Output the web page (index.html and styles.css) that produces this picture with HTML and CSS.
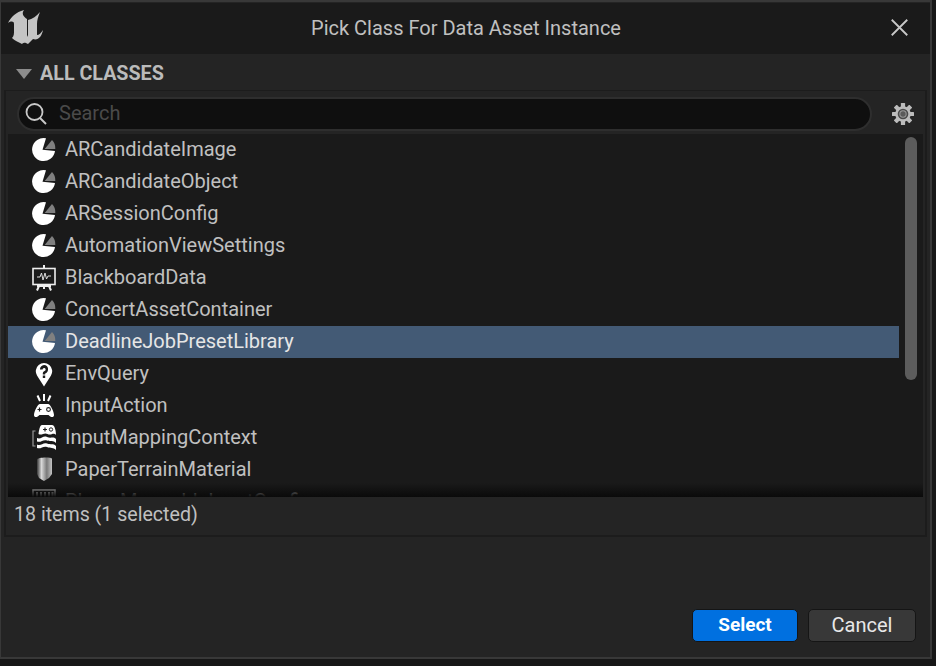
FILE: index.html
```html
<!DOCTYPE html>
<html>
    <head>
        <meta charset="utf-8">
        <title>Pick Class For Data Asset Instance</title>
        <link rel="stylesheet" href="styles.css">
    </head>
    <body>
        <svg class="defs" width="0" height="0">
            <symbol id="pie" viewBox="0 0 24 26">
                <path fill="#fff" d="M10.5 12.700 23 14A11.500 11.500 0 1 1 14 1.300Z"/>
                <path fill="#808080" d="M12.700 12 20 3A11.500 11.500 0 0 1 23.300 12Z"/>
            </symbol>
        </svg>

        <div class="window">
            <div class="titlebar">
                <svg class="logo" viewBox="8 10 35 35"><path fill="#c4c4c4" d="M8 23C11 17 16 12 24 10C21 14 24 17 27 19L27 35L28 37L28 20C32 19 37 16 40 12C38 17 37 20 37 24L37 35C39 35 41 33 43 30C42 36 38 41 33 39L28 44C25 43 25 42 22 44C19 42 15 41 12 38C14 36 14 34 14 30L14 24C14 21 11 21 8 23Z"/></svg>
                <div class="title">Pick Class For Data Asset Instance</div>
                <svg class="close" viewBox="0 0 16 16"><path d="M.7.7 15.3 15.3M15.3.7.7 15.3" stroke="#c8c8c8" stroke-width="1.7" fill="none"/></svg>
            </div>

            <div class="content">
                <div class="section">
                    <span class="arrow"></span>
                    ALL CLASSES
                </div>

                <div class="panel">
                    <div class="searchrow">
                        <div class="search">
                            <svg class="glass" viewBox="0 0 22 24"><circle cx="9.500" cy="10" r="8" stroke="#c8c8c8" stroke-width="1.800" fill="none"/><path d="M15 16 21 22" stroke="#c8c8c8" stroke-width="2" fill="none"/></svg>
                            <span class="hint">Search</span>
                        </div>
                        <svg class="gear" viewBox="0 0 24 24">
                            <g fill="#bcbcbc">
                                <rect x="9.700" y="0" width="4.600" height="24" rx=".6"/>
                                <rect x="9.700" y="0" width="4.600" height="24" rx=".6" transform="rotate(45 12 12)"/>
                                <rect x="9.700" y="0" width="4.600" height="24" rx=".6" transform="rotate(90 12 12)"/>
                                <rect x="9.700" y="0" width="4.600" height="24" rx=".6" transform="rotate(135 12 12)"/>
                                <circle cx="12" cy="12" r="8.500"/>
                            </g>
                            <circle cx="12" cy="12" r="5.800" fill="#4a4a4a"/>
                            <circle cx="12" cy="12" r="4" fill="#9a9a9a"/>
                            <circle cx="12" cy="12" r="2.900" fill="#5a5a5a"/>
                        </svg>
                    </div>

                    <div class="listwrap">
                        <div class="rows">
                            <div class="row"><svg class="ico"><use href="#pie"/></svg>ARCandidateImage</div>
                            <div class="row"><svg class="ico"><use href="#pie"/></svg>ARCandidateObject</div>
                            <div class="row"><svg class="ico"><use href="#pie"/></svg>ARSessionConfig</div>
                            <div class="row"><svg class="ico"><use href="#pie"/></svg>AutomationViewSettings</div>
                            <div class="row">
                                <svg class="ico" viewBox="0 0 24 26">
                                    <path d="M12 0V3" stroke="#eee" stroke-width="2"/>
                                    <rect x="1" y="3.500" width="22" height="16" fill="none" stroke="#eee" stroke-width="1.600"/>
                                    <path d="M5 12H8L9.500 8 11 15 13 8 14.500 14 16 11H19" fill="none" stroke="#ddd" stroke-width="1"/>
                                    <path d="M5 21H19M7 21 5 25.500M17 21 19 25.500M12 21V24" stroke="#eee" stroke-width="2" fill="none"/>
                                </svg>
                                BlackboardData
                            </div>
                            <div class="row"><svg class="ico"><use href="#pie"/></svg>ConcertAssetContainer</div>
                            <div class="row selected"><svg class="ico"><use href="#pie"/></svg>DeadlineJobPresetLibrary</div>
                            <div class="row">
                                <svg class="ico" viewBox="0 0 24 26">
                                    <path fill="#fff" fill-rule="evenodd" d="M12 25.500 5 14.500A8.200 8.200 0 1 1 19 14.500ZM12 4A4.200 4.200 0 0 0 8 8.500H10.600A1.500 1.500 0 1 1 12.500 10C11.400 10.500 10.800 11.200 10.800 12.500V13.500H13.200V12.600C14.800 12 16 10.500 16 8.500A4 4 0 0 0 12 4ZM10.800 14.500V17H13.200V14.500Z"/>
                                </svg>
                                EnvQuery
                            </div>
                            <div class="row">
                                <svg class="ico" viewBox="0 0 24 26">
                                    <path d="M12 1V8M5.500 2.500 8 8M18.500 2.500 16 8" stroke="#fff" stroke-width="2" fill="none"/>
                                    <path fill="#fff" d="M8 11H16C18.500 11 22 19 22 22C22 25 18.500 24.500 16.500 22H7.500C5.500 24.500 2 25 2 22C2 19 5.500 11 8 11Z"/>
                                    <path d="M5.500 16.500H9.500M7.500 14.500V18.500" stroke="#222" stroke-width="1.200"/>
                                    <circle cx="16.500" cy="16.500" r="1.900" fill="none" stroke="#222" stroke-width="1.100"/>
                                </svg>
                                InputAction
                            </div>
                            <div class="row">
                                <svg class="ico" viewBox="0 0 24 26">
                                    <path d="M3.500 6H1V21H3.500" fill="none" stroke="#999" stroke-width="1.200"/>
                                    <path fill="#fff" d="M10 0H20C22.500 0 24 5 24 10C21 7 19 11 15.500 9C12 7 10 11 6.500 9C7 5 8 0 10 0Z"/>
                                    <path d="M11 4.500H15M13 2.500V6.500" stroke="#222" stroke-width="1.200"/>
                                    <circle cx="19" cy="4.500" r="1.700" fill="none" stroke="#222" stroke-width="1"/>
                                    <path d="M5 13C9 15 11 10 15 12S21 11 24 14V18C21 15 19 17 15 15.500S9 18 5 16.500ZM5 19.500C9 21.500 11 17 15 18.500S21 18 24 21V25C21 22 19 23.500 15 22S9 24.500 5 23Z" fill="#fff"/>
                                </svg>
                                InputMappingContext
                            </div>
                            <div class="row">
                                <svg class="ico" viewBox="0 0 24 26">
                                    <defs>
                                        <linearGradient id="cyl"><stop offset="0" stop-color="#383838"/><stop offset=".3" stop-color="#d8d8d8"/><stop offset=".65" stop-color="#7a7a7a"/><stop offset="1" stop-color="#c4c4c4"/></linearGradient>
                                    </defs>
                                    <path fill="url(#cyl)" d="M5 3C5 0 20 0 20 2V17L17 21 12 24 7 21 5 17Z"/>
                                </svg>
                                PaperTerrainMaterial
                            </div>
                            <div class="row">
                                <svg class="ico" viewBox="0 0 24 26">
                                    <rect x="1" y="1" width="22" height="12" fill="none" stroke="#ccc" stroke-width="1.500"/>
                                    <path d="M5 3V8M9 3V8M13 3V8M17 3V8M20.500 3V8" stroke="#ccc" stroke-width="2"/>
                                </svg>
                                PlayerMappableInputConfig
                            </div>
                        </div>
                        <div class="track"><div class="thumb"></div></div>
                        <div class="fade"></div>
                    </div>

                    <div class="status">18 items (1 selected)</div>
                </div>

                <div class="footer">
                    <button class="btn primary">Select</button>
                    <button class="btn cancel">Cancel</button>
                </div>
            </div>
        </div>
    </body>
</html>
```

FILE: styles.css
```css
html, body {
    margin: 0;
    height: 100%;
    background: #171717;
    overflow: hidden;
}

body {
    font-family: Roboto, "Liberation Sans", sans-serif;
    font-size: 20px;
    color: #c0c0c0;
}

.defs {
    display: block;
    height: 0;
}

.window {
    box-sizing: border-box;
    width: 932px;
    height: 659px;
    border: 2px solid #383838;
    border-left-width: 1px;
    display: flex;
    flex-direction: column;
    background: #242424;
}

.titlebar {
    height: 51px;
    flex: none;
    box-sizing: border-box;
    background: #1a1a1a;
    display: flex;
    align-items: center;
    padding: 0 22px 2px 7px;
    margin-top: 1px;
}

.logo {
    width: 35px;
    height: 35px;
    flex: none;
}

.title {
    flex: 1;
    text-align: center;
    padding-right: 2px;
    color: #c0c0c0;
}

.close {
    width: 17px;
    height: 17px;
    flex: none;
}

.content {
    flex: 1;
    display: flex;
    flex-direction: column;
}

.section {
    height: 36px;
    flex: none;
    box-sizing: border-box;
    display: flex;
    align-items: center;
    padding: 3px 0 0 15px;
    font-size: 19.700px;
    font-weight: 700;
    color: #bbb;
    gap: 8px;
}

.arrow {
    width: 0;
    height: 0;
    border-left: 8px solid transparent;
    border-right: 8px solid transparent;
    border-top: 10px solid #8c8c8c;
}

.panel {
    margin: 0 3px 0 3px;
    border: 2px solid #1c1c1c;
    border-width: 1px 2px 2px 2px;
    padding: 0 2px;
    height: 447px;
    flex: none;
    display: flex;
    flex-direction: column;
    box-sizing: border-box;
}

.searchrow {
    height: 43px;
    flex: none;
    display: flex;
    align-items: flex-start;
    padding: 6px 0 0 9px;
    box-sizing: border-box;
}

.search {
    box-sizing: border-box;
    width: 855px;
    height: 34px;
    flex: none;
    background: #0f0f0f;
    border: 2px solid #2e2e2e;
    border-radius: 17px;
    display: flex;
    align-items: center;
    padding-left: 6px;
    gap: 12px;
    color: #4a4a4a;
}

.hint {
    padding-bottom: 2px;
}

.glass {
    width: 22px;
    height: 24px;
    flex: none;
}

.gear {
    width: 22px;
    height: 22px;
    flex: none;
    margin: 6px 0 0 20px;
}

.listwrap {
    position: relative;
    height: 363px;
    flex: none;
    display: flex;
    background: #1a1a1a;
    overflow: hidden;
}

.rows {
    flex: 1;
}

.row {
    height: 32px;
    display: flex;
    align-items: center;
    padding: 0 0 2px 24px;
    box-sizing: border-box;
    white-space: nowrap;
    color: #c0c0c0;
}

.row.selected {
    background: #435a75;
    color: #e6e6e6;
}

.ico {
    width: 24px;
    height: 26px;
    flex: none;
    margin: 2px 9px 0 0;
}

.track {
    width: 24px;
    flex: none;
}

.thumb {
    width: 12px;
    height: 243px;
    margin: 3px 0 0 6px;
    background: #5c5c5c;
    border-radius: 6px;
}

.fade {
    position: absolute;
    left: 0;
    right: 0;
    bottom: 0;
    height: 14px;
    background: linear-gradient(rgba(10, 10, 10, 0), #0a0a0a);
}

.status {
    flex: 1;
    display: flex;
    align-items: center;
    padding: 0 0 4px 6px;
    font-size: 19.600px;
    background: #242424;
}

.footer {
    flex: 1;
    display: flex;
    justify-content: flex-end;
    align-items: flex-end;
    gap: 10px;
    padding: 0 14px 15px 0;
}

.btn {
    width: 106px;
    height: 33px;
    font-family: inherit;
    font-size: 20px;
    color: #e8e8e8;
    background: #383838;
    border: 1px solid #151515;
    border-radius: 5px;
    padding: 0 0 2px;
}

.btn.cancel {
    width: 108px;
}

.btn.primary {
    background: #0070e0;
    color: #fff;
    font-size: 19px;
    font-weight: 700;
}
```
